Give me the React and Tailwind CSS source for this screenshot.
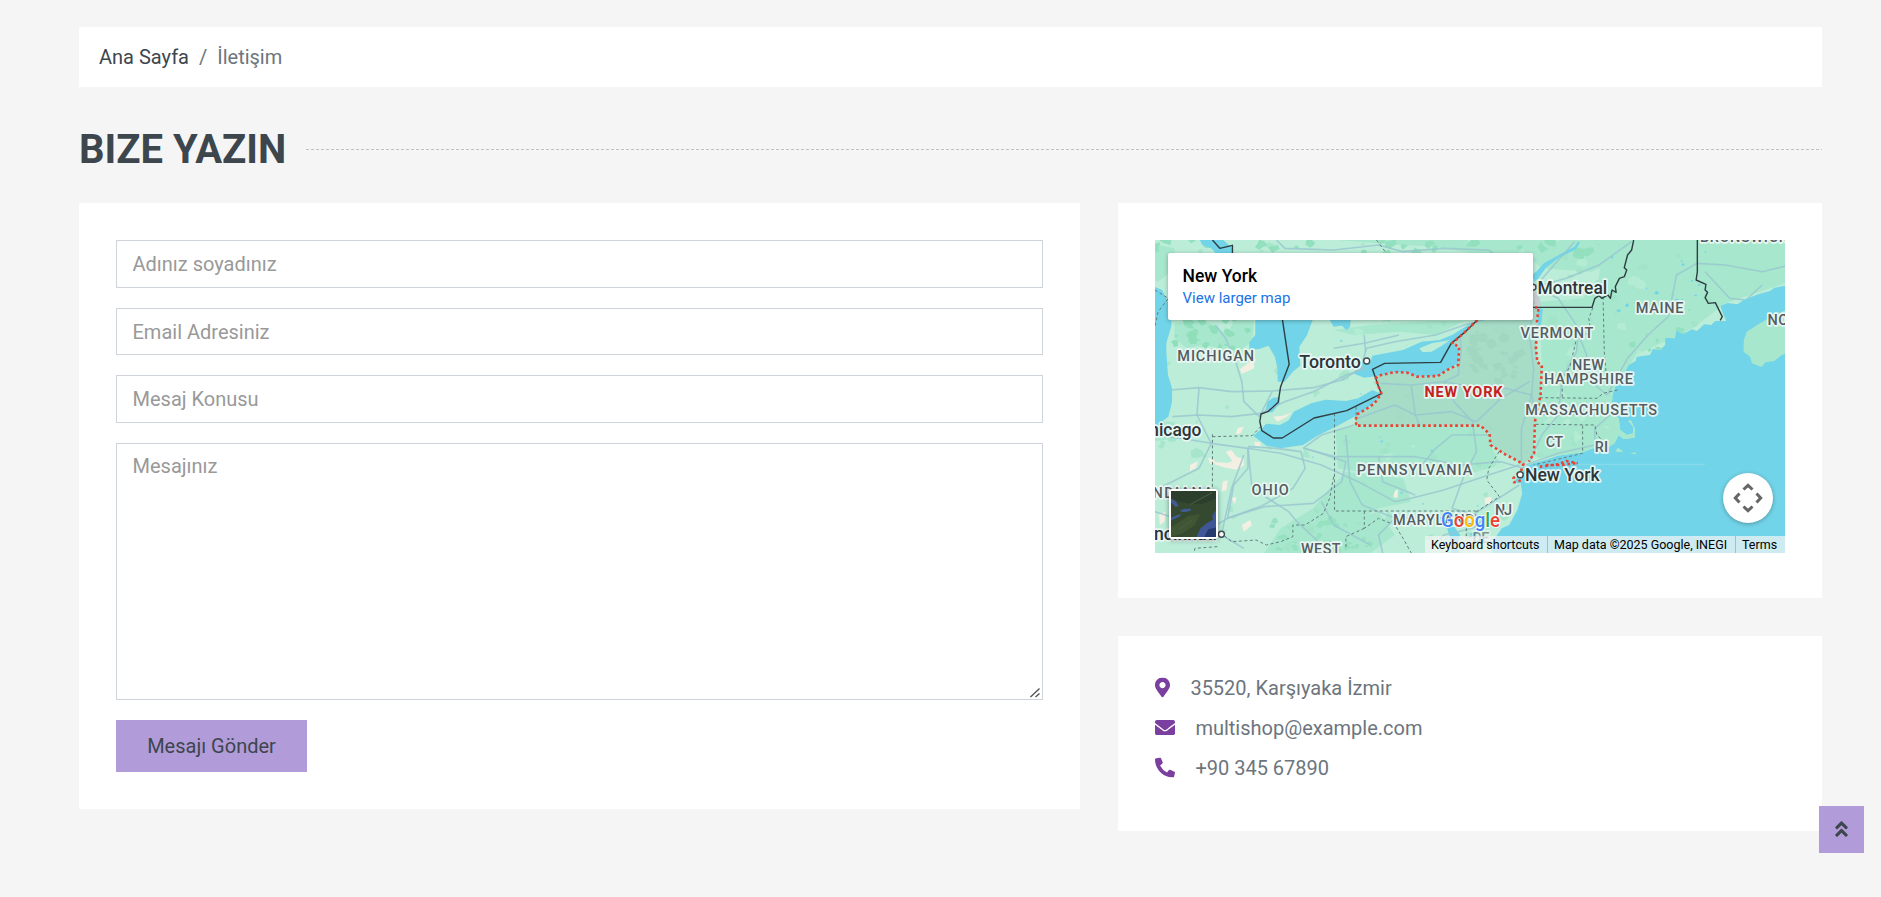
import React from "react";
import { FaMapMarkerAlt, FaEnvelope, FaPhoneAlt, FaAngleDoubleUp } from "react-icons/fa";

const LAND =
  "M0 0H1568V135L1556 152 1530 158 1519 168 1490 178 1454 195 1440 208 1415 204 1397 212 1404 236 1412 258 1385 258 1375 270 1358 268 1340 288 1328 283 1307 297 1290 285 1285 310 1262 308 1262 330 1250 345 1232 342 1225 360 1192 365 1190 378 1172 390 1164 410 1152 430 1140 455 1133 480 1132 500 1150 520 1128 540 1148 548 1152 585 1168 600 1184 595 1184 575 1172 558 1178 556 1188 582 1187 608 1160 612 1148 600 1138 625 1120 640 1085 640 1060 652 1000 662 960 678 925 692 912 712 890 742 908 745 912 775 900 825 880 870 862 880 845 910 832 980H0Z";
const NOVA = "M1568 220L1530 240 1490 268 1462 290 1455 315 1454 350 1470 365 1475 385 1498 396 1508 382 1530 378 1545 362 1568 350Z";
const NY =
  "M802 255L770 295 740 325 757 350 755 390 735 400 705 423 655 425 630 413 600 411 560 422 553 430 560 455 567 475 550 505 530 522 505 540 505 572 810 572 832 597 834 630 870 658 915 687 925 678 940 660 943 560 950 530 957 480 960 395 949 382 945 330 952 290 950 218 938 215 930 180 860 180Z";
const WATER = [
  "M0 150L30 165 45 205 53 270 40 325 40 350 44 420 54 460 54 500 45 545 28 560 12 590H0Z",
  "M120 10L175 10 202 40 202 60 165 60 150 40 128 30Z",
  "M258 250L258 300 243 322 244 345 268 342 290 332 306 365 312 400 313 440 330 440 350 410 368 392 366 335 385 300 400 250Z",
  "M438 250L450 275 470 272 482 286 490 275 492 250Z",
  "M288 500L302 488 318 486 318 505 300 532 282 532Z",
  "M253 602L270 585 285 566 318 570 340 556 352 530 395 505 430 494 480 498 510 490 545 465 568 478 545 508 505 542 460 572 410 602 375 630 320 640 285 632Z",
  "M497 415L520 385 540 380 545 362 590 352 620 345 665 320 710 315 740 300 760 285 790 262 770 295 742 325 757 345 755 385 735 400 705 423 655 425 630 413 600 411 560 422 525 428Z",
  "M905 702L940 684 1000 672 1060 657 1060 664 1000 682 935 694Z",
  "M740 865L748 880 760 900 752 930 760 960 740 960 735 910 728 880Z",
  "M783 895L790 910 800 905 800 892Z",
  "M950 218L962 222 960 250 957 285 952 290 950 260Z",
  "M936 120L948 108 965 85 1005 58 1040 35 1048 20 1054 22 1044 42 1000 70 970 98 952 130 942 140Z",
];
const FOREST = [
  "M300 0H1150L1120 90 1080 110 960 100 920 60 790 55 700 35 620 30Z",
  "M1110 0H1568V140L1410 205 1330 280 1190 360 1130 480 1060 500 962 480 955 200 1060 190 1100 130Z",
  "M955 480L1130 480 1190 560 1190 620 1090 650 950 670 942 570Z",
  "M455 585L505 572 810 572 832 600 834 630 860 690 770 720 720 680 650 690 560 680 510 710 460 700Z",
  "M480 710L540 720 620 730 640 800 560 820 500 860 430 954H280L320 880 400 820 440 760Z",
  "M430 870L560 830 600 900 540 954H420Z",
  "M60 265L120 255 160 270 205 320 200 345 130 330 90 340 60 310Z",
  "M205 255H255L250 320 215 350 190 300Z",
  "M0 25L60 40 60 100 20 140 0 120Z",
  "M0 560L60 560 70 610 0 620Z",
  "M450 285L540 270 690 258H770L700 300 610 290 500 300Z",
];
const ROADS = [
  "M50 465L120 458 200 470 300 468 400 458 470 435 525 395",
  "M55 545L120 540 200 545 270 535 330 500 400 470 480 420 530 400",
  "M160 270L185 310 210 380 225 440 230 500 268 545",
  "M12 600L75 610 150 625 240 640 240 700 205 750 190 850",
  "M240 635L310 640 370 650 380 700 350 760 275 812 190 850 120 900",
  "M240 640L320 655 420 690 510 740 600 800 640 790 720 765 830 720 905 690",
  "M230 660L200 760 175 900 230 940",
  "M150 625L120 700 30 755",
  "M190 850L280 815 400 805 470 740 480 680 380 640",
  "M375 640L455 665 555 665 650 665 760 690 860 680 915 700",
  "M480 600L490 740 520 810 600 850 700 850 790 840 905 750",
  "M500 570L420 600 375 640",
  "M565 445L640 450 720 440 790 455 870 460 935 480 945 540 1100 540 1145 520",
  "M510 550L600 510 650 540 740 530 800 560 860 490 930 440",
  "M640 450L650 540 660 570",
  "M720 440L745 500 790 560 800 650 770 720 740 820 820 850",
  "M760 300L762 350 755 420 720 440",
  "M940 200L930 300 940 400 935 480 910 580 910 690",
  "M520 385L530 340 600 320 700 300 770 270 860 240",
  "M525 300L528 350M450 340L525 325 610 300",
  "M620 50L720 40 830 45 940 160 1040 20",
  "M945 160L1000 190 1050 280 1045 350 1010 430 1000 540 960 600 930 680",
  "M945 155L1020 130 1100 90 1180 20",
  "M1120 480L1170 370 1220 300 1270 245 1290 120 1340 85 1410 90 1500 110 1568 90",
  "M1120 480L1060 420 1070 360 1050 300",
  "M1360 110L1420 190 1460 195 1500 150",
  "M1145 520L1090 580 1090 630 1000 655 920 690",
  "M340 830L360 860 430 940M340 830L250 760 240 640",
  "M600 850L560 900 570 954M820 850L790 880 720 900 690 940",
  "M420 800L450 870 540 930M12 830L90 860 180 900",
  "M310 15L330 40 450 45 560 30 620 50",
  "M120 460L115 540 150 625M300 468L268 545",
  "M660 700L700 640 740 600 830 600M560 665L570 740 650 780",
];
const STATE_LINES = [
  "M12 165L45 190 20 230 12 275",
  "M153 598V780M153 605L250 602 275 570",
  "M452 535V828H800",
  "M505 515V572",
  "M450 725L440 790 425 835 380 870 350 870 350 905 320 920 285 930 260 915 200 920 180 900M165 935L110 940 108 954",
  "M855 650L830 700 825 735 856 785 800 830 790 860",
  "M525 828V880L560 850 600 870 620 910 640 954M525 880L480 905 480 940",
  "M955 488L1095 490 1110 475 1145 465",
  "M945 568L1090 570 1095 600 1108 615",
  "M1060 572V655L940 690",
  "M1085 218L1075 250 1080 290 1045 310 1030 390 1010 440 1010 488",
  "M1110 185L1113 350 1120 450",
  "M555 15L575 48",
  "M775 830V905L830 905",
];
const BORDERS = [
  "M153 15L171 40 202 31 202 60",
  "M324 250L341 388 320 455 314 502 290 529 272 537 269 560 274 587 302 609 324 609 402 549 482 527 567 476 560 455 553 430 545 403 575 385 712 382 738 325 770 293 802 255",
  "M938 217H1083L1090 190 1100 182 1107 190 1122 180 1128 190 1132 165 1142 172 1140 155 1150 130 1162 125 1168 105 1162 98 1170 60 1180 45 1185 15",
  "M1341 15V110L1338 135 1362 148 1360 165 1366 172 1360 188 1368 205 1385 203 1402 245 1397 256",
];
const RED = [
  "M802 255L770 293 740 325 757 335 757 350 755 390 735 400 705 423 655 425 630 413 600 411 560 422 553 430 560 455 567 475 550 505 530 522 505 540 505 572 810 572 832 597 834 630 870 658 915 687 910 705 890 730 892 742 912 735",
  "M943 217H952L948 260 951 290 945 330 949 382 960 390 957 480 950 520 943 560 941 655 928 680",
  "M955 695L1000 688 1020 678 1048 685M970 690L1010 690 1045 684",
];
const SAND = [
  "M302 545L325 542 347 533 335 545 312 560Z",
  "M220 402L245 380 262 370 255 385 255 400 225 417Z",
  "M185 650L200 645 212 665 230 672 230 692 212 704 180 697 157 688 160 681 190 684 202 678Z",
  "M98 690L118 678 112 700 98 708Z",
  "M142 668L158 675 160 683 148 688Z",
  "M215 578L230 575 222 595 210 598Z",
  "M255 620L270 622 272 635 258 632Z",
  "M178 740L190 735 188 765 175 770Z",
  "M200 790L212 785 208 808Z",
  "M225 870L245 855 250 870 230 890Z",
  "M600 768L608 762 606 790 596 785Z",
  "M820 790L836 785 836 805 822 812Z",
  "M22 838L38 830 36 860 24 870Z",
];

// Deterministic scatter of small vegetation and lake shapes.
function scatter(count, seed, x0, y0, w, h, size) {
  let s = seed;
  const r = () => {
    s = (s * 16807) % 2147483647;
    return s / 2147483647;
  };
  const out = [];
  for (let i = 0; i < count; i++) {
    const cx = x0 + r() * w;
    const cy = y0 + r() * h;
    const rad = size * (0.35 + r());
    const pts = [];
    for (let k = 0; k < 7; k++) {
      const a = (k / 7) * Math.PI * 2;
      const q = rad * (0.4 + r() * 0.8);
      pts.push(`${(cx + Math.cos(a) * q).toFixed(0)} ${(cy + Math.sin(a) * q).toFixed(0)}`);
    }
    out.push("M" + pts.join("L") + "Z");
  }
  return out.join("");
}

const LABELS = [
  ["MICHIGAN", 22.3, 121, 76.7],
  ["MAINE", 480.7, 73, 47.8],
  ["VERMONT", 365.6, 97.6, 72.7],
  ["NEW", 417, 130.3, 32],
  ["HAMPSHIRE", 389, 144, 89],
  ["MASSACHUSETTS", 370.3, 174.7, 131.8],
  ["CT", 390.7, 207.3, 17.5],
  ["RI", 439.7, 211.6, 13.4],
  ["PENNSYLVANIA", 201.8, 235, 115.6],
  ["OHIO", 96.6, 255.2, 37.2],
  ["MARYLAND", 238, 284.8, 81.6],
  ["NJ", 340, 274.8, 17.1],
  ["WEST", 146, 314, 39.6],
  ["INDIANA", -8, 258.3, 66],
  ["NOVA", 612.5, 85.3, 40],
  ["BRUNSWICK", 545, 2.3, 88],
];
const CITIES = [
  ["Toronto", 144.3, 127.6, 61.6],
  ["Montreal", 382.6, 54.1, 69.6],
  ["New York", 370, 240.7, 74.6],
  ["Chicago", -17, 196.3, 63.4],
  ["Cincinnati", -17, 299.6, 79],
];
const DOTS = [[211.7, 121], [377.9, 47.3], [365.2, 234.7], [66.4, 294.3]];

function Lines({ paths, ...rest }) {
  return (
    <g fill="none" strokeLinejoin="round" {...rest}>
      {paths.map((d) => (
        <path key={d} d={d} vectorEffect="non-scaling-stroke" />
      ))}
    </g>
  );
}

function MapCanvas() {
  return (
    <>
      <svg className="absolute inset-0 h-full w-full" viewBox="12.25 15 1543.5 939" preserveAspectRatio="none">
        <defs>
          <clipPath id="land"><path d={LAND + NOVA} /></clipPath>
        </defs>
        <rect width="1568" height="980" fill="#72d4e8" />
        <path d={LAND} fill="#bbedd8" />
        <path d={NOVA} fill="#a7e7cd" />
        <g clipPath="url(#land)">
          {FOREST.map((d) => (
            <path key={d} d={d} fill="#a7e7cd" />
          ))}
          <path d={scatter(150, 77, 0, 0, 1400, 960, 13)} fill="#a0e3c6" opacity="0.7" />
          <path d={scatter(60, 901, 500, 0, 900, 700, 15)} fill="#b6ecd5" opacity="0.8" />
          <path d={scatter(28, 341, 60, 240, 190, 100, 12)} fill="#8fdfbb" />
          <path d={scatter(26, 53, 0, 10, 1100, 50, 16)} fill="#92e0bd" />
          <path d={scatter(26, 55, 300, 850, 250, 100, 12)} fill="#96e1c0" />
          <path d={scatter(14, 217, 1180, 280, 200, 90, 9)} fill="#92e0bd" />
          <path d={scatter(18, 1217, 1130, 50, 240, 220, 5)} fill="#72d4e8" />
          <path d={scatter(30, 4217, 380, 250, 600, 600, 4)} fill="#84d9e4" />
        </g>
        <path d={NY} fill="#a4d9c4" fillOpacity="0.88" />
        <path d={scatter(26, 991, 790, 290, 130, 150, 14)} fill="#9bd4bd" opacity="0.7" />
        <path d={WATER.join("")} fill="#72d4e8" />
        <path d="M660 340L690 325 735 315 715 332 690 350 668 352Z" fill="#bbedd8" />
        <path d={SAND.join("")} fill="#f3efe2" />
        <path d="M932 188L945 165 955 190 958 212 945 214Z" fill="#c5cfcf" />
        <g clipPath="url(#land)">
          <Lines paths={ROADS} stroke="#98c6cf" strokeWidth="1.6" strokeOpacity="0.8" />
        </g>
        <Lines paths={STATE_LINES} stroke="#62807d" strokeWidth="1" strokeDasharray="3 2.5" />
        <Lines paths={BORDERS} stroke="#2f3e42" strokeWidth="1.4" />
        <Lines paths={RED} stroke="#ea4335" strokeWidth="2.6" strokeDasharray="2.6 2.8" />
        <Lines paths={["M1048 688H1360"]} stroke="#8edbea" strokeWidth="1" />
        <path d="M1140 650L1146 638 1155 645 1158 652ZM1176 655L1190 652 1190 658Z" fill="#a7e7cd" />
      </svg>
      <svg className="absolute inset-0 h-full w-full" viewBox="0 0 630 313" fontFamily="Roboto, sans-serif">
        <g stroke="#ebf8f4" strokeOpacity="0.95" strokeWidth="3.4" strokeLinejoin="round" style={{ paintOrder: "stroke" }}>
          <g fontSize="14.5" fontWeight="500" fill="#545d61">
            {LABELS.map(([t, x, y, w]) => (
              <text key={t} x={x} y={y} textLength={w}>{t}</text>
            ))}
            <text x="317.4" y="302.7" textLength="17" opacity="0.6">DE</text>
          </g>
          <text x="269.5" y="156.8" textLength="78" fontSize="14.5" fontWeight="700" fill="#c5221f">NEW YORK</text>
          <g fontSize="17.6" fontWeight="500" fill="#2c3539">
            {CITIES.map(([t, x, y, w]) => (
              <text key={t} x={x} y={y} textLength={w} lengthAdjust="spacingAndGlyphs">{t}</text>
            ))}
          </g>
        </g>
        {DOTS.map(([x, y]) => (
          <circle key={x} cx={x} cy={y} r="3" fill="#fff" stroke="#3f4a4e" strokeWidth="1.4" />
        ))}
        <text x="286" y="286.6" textLength="59" fontSize="20.5" fontWeight="500" stroke="#fff" strokeOpacity="0.8" strokeWidth="2" lengthAdjust="spacingAndGlyphs" style={{ paintOrder: "stroke" }}>
          <tspan fill="#4285f4">G</tspan><tspan fill="#ea4335">o</tspan><tspan fill="#fbbc04">o</tspan><tspan fill="#4285f4">g</tspan><tspan fill="#34a853">l</tspan><tspan fill="#ea4335">e</tspan>
        </text>
      </svg>
    </>
  );
}

function SatelliteThumb() {
  return (
    <svg viewBox="0 0 46 48" className="h-full w-full" preserveAspectRatio="none">
      <rect width="46" height="48" fill="#34492f" />
      <path d="M0 0H46V8L30 14 12 12 0 8Z" fill="#2c3f2d" />
      <path d="M6 34L18 26 30 24 24 36 12 44 0 48V38Z" fill="#3f5534" />
      <path d="M20 14L34 6 42 2M8 40L22 30" stroke="#4b6043" strokeWidth="1" fill="none" />
      <path d="M0 8L4 10 8 15 5 17 0 12ZM9 20L14 18.5 20 18.5 21 20 16 22 11 22ZM0 28L6 25 11 24 8 27 2 30 0 30Z" fill="#415a94" />
      <path d="M46 20L42 26 43 30 36 34 30 39 26 48H46Z" fill="#3f5796" />
      <path d="M46 38L38 40 34 48H46Z" fill="#263a6e" />
    </svg>
  );
}

function MapEmbed() {
  return (
    <div className="relative h-[313px] w-full overflow-hidden">
      <MapCanvas />
      <div className="absolute left-[13px] top-[13px] flex h-[67px] w-[365px] flex-col rounded-[2px] bg-white pl-[14.5px] pt-[11px] shadow-[0_1px_4px_rgba(0,0,0,0.3)]">
        <div className="text-[17.5px] font-medium leading-[24px] text-black">New York</div>
        <div className="text-[15px] leading-[20px] text-[#1a73e8]">View larger map</div>
      </div>
      <div className="absolute left-[14px] top-[249px] h-[50px] w-[49px] rounded-[3px] border-2 border-white bg-white shadow-[0_1px_5px_rgba(0,0,0,0.4)]">
        <SatelliteThumb />
      </div>
      <div className="absolute left-[568px] top-[233px] flex size-[50px] items-center justify-center rounded-full bg-white shadow-[0_1px_4px_rgba(0,0,0,0.3)]">
        <svg viewBox="0 0 30 30" className="size-[30px]" fill="none" stroke="#666" strokeWidth="3">
          <path d="M10.5 6.5L15 2.3 19.5 6.5M10.5 23.5L15 27.7 19.5 23.5M6.5 10.5L2.3 15 6.5 19.5M23.5 10.5L27.7 15 23.5 19.5" />
        </svg>
      </div>
      <div className="absolute bottom-0 right-0 flex h-[17px] gap-px text-[12.5px] leading-[18px] text-black">
        <div className="w-[122px] whitespace-nowrap bg-[#f5f5f5]/70 pl-[6px]">Keyboard shortcuts</div>
        <div className="w-[187px] whitespace-nowrap bg-[#f5f5f5]/70 pl-[6px]">Map data ©2025 Google, INEGI</div>
        <div className="w-[49px] whitespace-nowrap bg-[#f5f5f5]/70 pl-[6px]">Terms</div>
      </div>
    </div>
  );
}

const FIELD =
  "block w-full rounded-none border border-[#ced4da] bg-white px-[15.5px] text-[20px] leading-[30px] text-[#495057] outline-none placeholder:text-[#999]";

export default function App() {
  return (
    <div className="relative h-[897px] w-full overflow-hidden bg-[#f5f5f5] pl-[79px] pr-[59px] pt-[27px] font-['Roboto',sans-serif] text-[20px] leading-[30px] text-[#6c757d]">
      <nav className="flex h-[60px] items-center bg-white px-5">
        <a className="text-[#3d464d]">Ana Sayfa</a>
        <span className="px-[10px]">/</span>
        <span>İletişim</span>
      </nav>
      <h2 className="mt-[37px] flex h-[50px] items-center text-[40px] font-bold leading-[50px] text-[#3d464d]">
        <span className="pr-5 pt-[2px]">BIZE YAZIN</span>
        <span className="h-px flex-1 bg-[repeating-linear-gradient(90deg,#bfc2c4_0_3px,transparent_3px_5px)]" />
      </h2>
      <div className="mt-[29px] flex items-start gap-[38px]">
        <form className="flex h-[606px] w-[1001px] flex-col items-start bg-white p-[37px]">
          <input className={`${FIELD} mb-5 h-[47.5px]`} placeholder="Adınız soyadınız" />
          <input className={`${FIELD} mb-5 h-[47.5px] pt-px`} placeholder="Email Adresiniz" />
          <input className={`${FIELD} mb-5 h-[47.5px]`} placeholder="Mesaj Konusu" />
          <div className="relative mb-5 h-[257px] w-full shrink-0">
            <textarea className={`${FIELD} h-full resize-none py-[7.5px]`} placeholder="Mesajınız" />
            <svg viewBox="0 0 12 12" className="absolute bottom-[1px] right-[2px] size-[12px]" fill="none" stroke="#555" strokeWidth="1.4">
              <path d="M1.5 10L10.5 1.5M6.5 10L10.5 6.5" />
            </svg>
          </div>
          <button type="button" className="h-[52px] w-[191px] shrink-0 bg-[#b19cd9] text-[#3d464d]">Mesajı Gönder</button>
        </form>
        <div className="flex flex-1 flex-col gap-[38px]">
          <div className="h-[395px] bg-white px-[37px] pt-[37px]">
            <MapEmbed />
          </div>
          <div className="flex h-[195px] flex-col gap-[10px] bg-white px-[37.4px] pt-[37px]">
            <p className="flex items-center">
              <FaMapMarkerAlt className="mr-5 h-5 w-[15px] -translate-y-[0.5px] text-[#7b3fa0]" />
              35520, Karşıyaka İzmir
            </p>
            <p className="flex items-center">
              <FaEnvelope className="mr-5 size-5 -translate-y-[0.5px] text-[#7b3fa0]" />
              multishop@example.com
            </p>
            <p className="flex items-center">
              <FaPhoneAlt className="mr-5 size-5 -translate-y-[0.5px] text-[#7b3fa0]" />
              +90 345 67890
            </p>
          </div>
        </div>
      </div>
      <a className="absolute left-[1819px] top-[806px] flex h-[47px] w-[45px] items-center justify-center bg-[#b19cd9] text-[#3d464d]">
        <FaAngleDoubleUp className="size-5 -translate-x-[0.5px] -translate-y-px" />
      </a>
    </div>
  );
}
